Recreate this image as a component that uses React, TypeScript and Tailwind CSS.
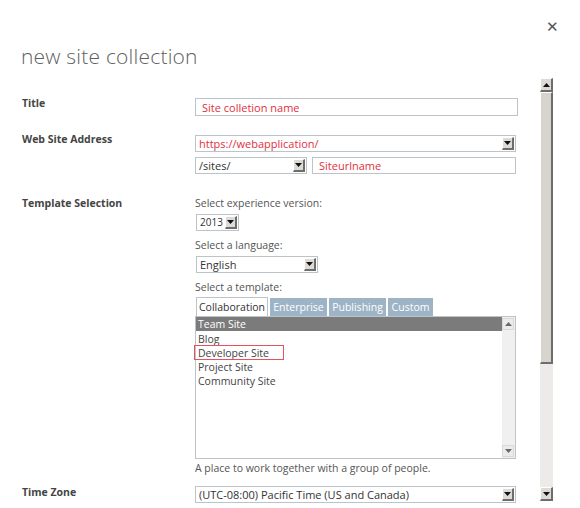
import { ReactNode } from "react";

const font = { fontFamily: '"Open Sans", "Noto Sans", sans-serif' };

const Arrow = ({ up = false }: { up?: boolean }) => (
  <svg width="7" height="4" viewBox="0 0 7 4" className="block">
    {up ? <polygon points="0,4 7,4 3.5,0" fill="#111" /> : <polygon points="0,0 7,0 3.5,4" fill="#111" />}
  </svg>
);

const DropButton = () => (
  <span className="flex h-[13px] w-[12px] shrink-0 items-center justify-center border-b-2 border-r-2 border-t border-l border-t-white border-l-white border-b-[#6d6d6d] border-r-[#6d6d6d] bg-[#dedbd6]">
    <Arrow />
  </span>
);

const Select = ({
  value,
  className,
  red = false,
}: {
  value: string;
  className: string;
  red?: boolean;
}) => (
  <div
    className={`flex h-[17px] items-center justify-between border border-[#bcc3c9] bg-white pl-[3px] pr-[1px] leading-[15px] ${
      red ? "text-[#e2303c]" : "text-[#333]"
    } ${className}`}
  >
    <span className="whitespace-nowrap">{value}</span>
    <DropButton />
  </div>
);

const Field = ({ value, className }: { value: string; className: string }) => (
  <div
    className={`flex h-[17px] items-center border border-[#bcc3c9] bg-white pl-[6px] text-[11px] leading-[15px] text-[#e2303c] ${className}`}
  >
    {value}
  </div>
);

const Row = ({
  label,
  children,
  labelClass = "",
}: {
  label: string;
  children: ReactNode;
  labelClass?: string;
}) => (
  <div className="grid grid-cols-[173px_1fr]">
    <div className={`text-[10.5px] font-bold leading-[14px] text-[#444] ${labelClass}`}>{label}</div>
    <div>{children}</div>
  </div>
);

const Hint = ({ children }: { children: ReactNode }) => (
  <div className="text-[10.5px] leading-[14px] text-[#555]">{children}</div>
);

const templates = ["Blog", "Developer Site", "Project Site", "Community Site"];

export default function App() {
  return (
    <div className="h-[508px] w-[580px] overflow-hidden bg-white" style={font}>
      <div className="flex justify-end pr-[21px] pt-[19px]">
        <span className="text-[15px] leading-none text-[#555]">✕</span>
      </div>
      <h1 className="ml-[21px] mt-[10px] text-[21px] font-light leading-[24px] tracking-[0.2px] text-[#5f5f5f]">
        new site collection
      </h1>
      <div className="mt-[10px] flex">
        <div className="ml-[22px] w-[496px] pt-[20px]">
          <Row label="Title" labelClass="-mt-[2px]">
            <Field value="Site colletion name" className="h-[18px] w-[323px]" />
          </Row>

          <div className="mt-[19px]">
            <Row label="Web Site Address" labelClass="-mt-[3px]">
              <Select value="https://webapplication/" className="w-[321px] text-[11px]" red />
              <div className="mt-[5px] flex gap-[5px]">
                <Select value="/sites/" className="w-[112px] text-[11px]" />
                <Field value="Siteurlname" className="w-[204px]" />
              </div>
            </Row>
          </div>

          <div className="mt-[22px]">
            <Row label="Template Selection">
              <Hint>Select experience version:</Hint>
              <Select value="2013" className="ml-[1px] mt-[4px] w-[43px] text-[10px]" />
              <div className="mt-[7px]">
                <Hint>Select a language:</Hint>
              </div>
              <Select value="English" className="ml-[1px] mt-[4px] w-[122px] text-[11px]" />
              <div className="mt-[7px]">
                <Hint>Select a template:</Hint>
              </div>
              <div className="ml-[1px] mt-[3px] flex h-[19px] items-end gap-[2px] text-[10.5px] leading-none">
                <span className="flex h-[19px] w-[72px] items-center justify-center border border-b-0 border-[#bcc3c9] bg-white text-[#333]">
                  Collaboration
                </span>
                <span className="flex h-[18px] w-[57px] items-center justify-center bg-[#9db3c6] text-white">
                  Enterprise
                </span>
                <span className="flex h-[18px] w-[57px] items-center justify-center bg-[#9db3c6] text-white">
                  Publishing
                </span>
                <span className="flex h-[18px] w-[45px] items-center justify-center bg-[#9db3c6] text-white">
                  Custom
                </span>
              </div>
              <div className="flex h-[143px] w-[321px] border border-[#bcc3c9] bg-white">
                <div className="flex-1 text-[10.5px] leading-[14px] text-[#444]">
                  <div className="h-[14px] bg-[#7b7b7b] pl-[2px] text-white">Team Site</div>
                  <div className="pl-[2px] pt-[1px]">
                    {templates.map((t) => (
                      <div key={t} className="relative h-[14px]">
                        {t === "Developer Site" && (
                          <span className="absolute -left-[4px] -top-[1px] h-[15px] w-[90px] border border-[#e8505a]" />
                        )}
                        {t}
                      </div>
                    ))}
                  </div>
                </div>
                <div className="flex w-[13px] flex-col justify-between bg-[#f0f0f0] py-[1px]">
                  <span className="flex h-[12px] w-[12px] items-center justify-center border border-[#c9c9c9] bg-[#e9e9e9] opacity-60">
                    <Arrow up />
                  </span>
                  <span className="flex h-[12px] w-[12px] items-center justify-center border border-[#c9c9c9] bg-[#e9e9e9] opacity-60">
                    <Arrow />
                  </span>
                </div>
              </div>
              <div className="mt-[2px]">
                <Hint>A place to work together with a group of people.</Hint>
              </div>
            </Row>
          </div>

          <div className="mt-[11px] grid grid-cols-[173px_1fr]">
            <div className="-mt-[1px] text-[10.5px] font-bold leading-[14px] text-[#444]">Time Zone</div>
            <Select value="(UTC-08:00) Pacific Time (US and Canada)" className="w-[321px] text-[11px]" />
          </div>
        </div>

        <div className="ml-[22px] flex h-[423px] w-[13px] flex-col bg-[#ecebe9]">
          <span className="flex h-[14px] w-[13px] items-center justify-center border-b-2 border-r-2 border-t border-l border-t-white border-l-white border-b-[#6d6d6d] border-r-[#6d6d6d] bg-[#dedbd6]">
            <Arrow up />
          </span>
          <span className="h-[272px] w-[13px] border-b-2 border-r-2 border-t border-l border-t-white border-l-white border-b-[#6d6d6d] border-r-[#6d6d6d] bg-[#d7d3cd]" />
          <span className="flex-1" />
          <span className="flex h-[14px] w-[13px] items-center justify-center border-b-2 border-r-2 border-t border-l border-t-white border-l-white border-b-[#6d6d6d] border-r-[#6d6d6d] bg-[#dedbd6]">
            <Arrow />
          </span>
        </div>
      </div>
    </div>
  );
}
